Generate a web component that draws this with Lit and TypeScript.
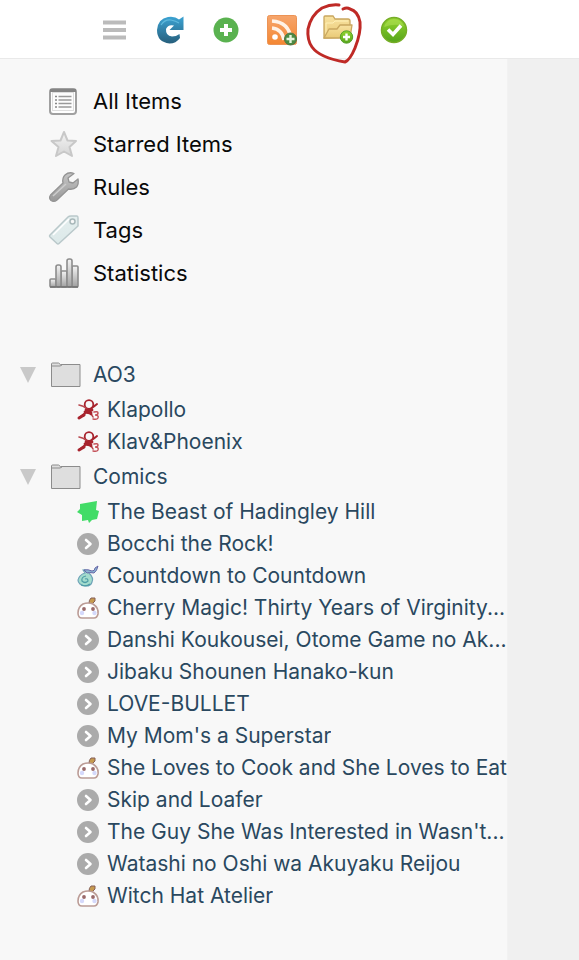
import { LitElement, html, css, svg, nothing } from "lit";
import { customElement, state } from "lit/decorators.js";

type FeedIcon = "ao3" | "tapas" | "arrow" | "wisp" | "mochi";
interface Feed { title: string; icon: FeedIcon; }
interface Folder { name: string; feeds: Feed[]; }

const folders: Folder[] = [
  {
    name: "AO3",
    feeds: [
      { title: "Klapollo", icon: "ao3" },
      { title: "Klav&Phoenix", icon: "ao3" },
    ],
  },
  {
    name: "Comics",
    feeds: [
      { title: "The Beast of Hadingley Hill", icon: "tapas" },
      { title: "Bocchi the Rock!", icon: "arrow" },
      { title: "Countdown to Countdown", icon: "wisp" },
      { title: "Cherry Magic! Thirty Years of Virginity...", icon: "mochi" },
      { title: "Danshi Koukousei, Otome Game no Ak...", icon: "arrow" },
      { title: "Jibaku Shounen Hanako-kun", icon: "arrow" },
      { title: "LOVE-BULLET", icon: "arrow" },
      { title: "My Mom's a Superstar", icon: "arrow" },
      { title: "She Loves to Cook and She Loves to Eat", icon: "mochi" },
      { title: "Skip and Loafer", icon: "arrow" },
      { title: "The Guy She Was Interested in Wasn't...", icon: "arrow" },
      { title: "Watashi no Oshi wa Akuyaku Reijou", icon: "arrow" },
      { title: "Witch Hat Atelier", icon: "mochi" },
    ],
  },
];

const feedIcons: Record<FeedIcon, unknown> = {
  ao3: svg`<g fill="none" stroke="#a8242e" stroke-linecap="round">
      <circle cx="12" cy="5.500" r="4.300" stroke-width="1.800"/>
      <path d="M2 6C8 7 13 12 16 18" stroke-width="1.600" stroke="#b8474e"/>
      <path d="M20 5C15 9 8 14 2 19" stroke-width="2"/>
      <path d="M9 11l6 0M8 13l6 1M10 12l4 3" stroke-width="2.800"/>
      <path d="M2 19l5-3" stroke-width="3"/>
      <path d="M17 13q4-1 4 1q0 2-3 2q4 0 3 3q-1 2-5 1" stroke="#c4525a" stroke-width="1.500"/>
    </g>`,
  tapas: svg`<path d="M3 3l17-3-1 9 3 1-2 8-5 1-3 3-1-3-6 1 0-6-5-3 3-3z" fill="#42dc67"/>`,
  arrow: svg`<circle cx="11" cy="11" r="11" fill="#ababab"/>
    <path d="M9 7l4.500 4-4.500 4" fill="none" stroke="#fff" stroke-width="2.600" stroke-linecap="round" stroke-linejoin="round"/>`,
  wisp: svg`<path d="M6 5q4-1 6 3q5 5 3 9q-1 4-6 4q-8-1-8-6q1-5 7-7z" fill="#a3dccd" stroke="#6fa3b8" stroke-width="1.200"/>
    <path d="M7 5q4-1 8 1q3 0 3-3l3-2q-1 5-4 7q-5-1-7 0z" fill="#8ab5d2" stroke="#6867a8" stroke-width="1"/>
    <path d="M9 11q-5 1-4 5q3 3 6 0q0-3-3-2M4 20q5 2 9-1" fill="none" stroke="#4d9ca6" stroke-width="1.200"/>`,
  mochi: svg`<path d="M12 6q0-3 2-5l4 0 0 3-3 3z" fill="#c69a4e" stroke="#855f57" stroke-width="1"/>
    <path d="M6 7q5-2 10 0q6 4 5 10q-1 4-4 4H5q-4 0-4-5q0-6 5-9z" fill="#fff" stroke="#bb9c96" stroke-width="1.600"/>
    <circle cx="7" cy="12" r="1.900" fill="#9a6a6b"/><circle cx="16" cy="12" r="1.900" fill="#9a6a6b"/>
    <circle cx="5" cy="16" r="2.200" fill="#d5d9fb"/><circle cx="17.500" cy="16" r="2.200" fill="#d5d9fb"/>`,
};

const navItems: { label: string; icon: unknown }[] = [
  {
    label: "All Items",
    icon: svg`<rect x="1" y="3" width="26" height="25" rx="3" fill="#fff" stroke="#a0a0a0" stroke-width="2"/>
      <path d="M1 4.500h26" stroke="#858585" stroke-width="3"/>
      <rect x="3.500" y="6.500" width="21" height="18" fill="#fdfdfd" stroke="#dedede"/>
      <path d="M9.500 10.500h13M9.500 14h13M9.500 17.500h13M9.500 21h13" stroke="#9a9a9a" stroke-width="1.500"/>
      <path d="M6 10.500h2M6 14h2M6 17.500h2M6 21h2" stroke="#888" stroke-width="1.500"/>`,
  },
  {
    label: "Starred Items",
    icon: svg`<path d="M15 3l3.500 8.500 8.500.5-6.500 6 2.500 9-8-4.500-8 4.500 2.500-9-7-6 9-.5z" fill="url(#star)" stroke="#c8c8c8" stroke-width="2" stroke-linejoin="round"/>`,
  },
  {
    label: "Rules",
    icon: svg`<path d="M25 1.500q-5-2-9 1.500-3 3-2 8L1.500 23q-2 3 .5 5.500 3 2 6-.5L19.500 17q5 1 8-2 2.500-3 1.500-8l-5 4-4-1-1-4z" fill="url(#steel)" stroke="#949494" stroke-width="1.300" stroke-linejoin="round"/>
      <path d="M4 24L17 12" stroke="#cdcdcd" stroke-width="1.500"/>`,
  },
  {
    label: "Tags",
    icon: svg`<path d="M19 2q1-1 3-1h6q1 0 1 2v8L10 28.500q-1 1-2 0L1 22q-1-1 0-2z" fill="url(#tag)" stroke="#b9c8ca" stroke-width="1.500" stroke-linejoin="round"/>
      <path d="M20 4L4 20" stroke="#fff" stroke-width="1.500"/>
      <circle cx="23.500" cy="6.500" r="2.500" fill="#f8f8f8" stroke="#a9b8ba" stroke-width="1.500"/>`,
  },
  {
    label: "Statistics",
    icon: svg`<g fill="url(#bars)" stroke="#8d8d8d" stroke-width="1.600">
      <rect x="1" y="21" width="6" height="8" rx="1"/><rect x="12" y="13" width="6" height="16" rx="1"/>
      <rect x="23" y="8" width="6" height="21" rx="1"/><rect x="7" y="7" width="5" height="22" rx="2"/>
      <rect x="18" y="1" width="5" height="28" rx="2"/></g>
      <path d="M1 29h28" stroke="#707070" stroke-width="1.500"/>`,
  },
];

const badge = svg`<circle cx="23.500" cy="22" r="6.200" fill="url(#green)" stroke="#57a12d"/>
  <path d="M23.500 18.500v7M20 22h7" stroke="#fff" stroke-width="2.400"/>`;

const tools: { label: string; icon: unknown; ringed?: boolean }[] = [
  { label: "Menu", icon: svg`<path d="M4 7.500h23M4 15h23M4 22.500h23" stroke="#bbb" stroke-width="4"/>` },
  {
    label: "Refresh",
    icon: svg`<path d="M28.500 1.500v13.500H14.500l4.500-4.500q-6-1.500-8 3.500-.5 7 6 7.500 4 0 7.500-2.500l.5 4q-4 5.500-10.500 5.500Q2 27 2 15 3 3.500 13 2q7-1 11 2.500z" fill="url(#blue)"/>
      <path d="M6 10q4-6 10-5 5 1 8 3" fill="none" stroke="#5fb9dc" stroke-width="1.200"/>`,
  },
  {
    label: "Add subscription",
    icon: svg`<circle cx="15" cy="15" r="12.500" fill="#5ab250"/><path d="M15 9v12M9 15h12" stroke="#fff" stroke-width="4"/>`,
  },
  {
    label: "Add feed",
    icon: svg`<rect x=".5" y=".5" width="29" height="29" rx="2" fill="url(#orange)" stroke="#ec9355"/>
      <circle cx="8" cy="22" r="2.800" fill="#fff"/><path d="M5 13q10 1 12 12M5 6q17 1 19 18" fill="none" stroke="#fff2e6" stroke-width="3.600"/>
      <circle cx="23.500" cy="24" r="6" fill="#4c8b43" stroke="#4a7444"/><path d="M23.500 20v8M19.500 24h8" stroke="#e6f4dd" stroke-width="2.400"/>`,
  },
  {
    label: "Add folder",
    ringed: true,
    icon: svg`<path d="M1 23V2q0-1 1-1h8l2 3h13q2 0 2 2v16z" fill="url(#sand)" stroke="#c9a75f" stroke-width="1.300"/>
      <path d="M3 21V8h7l2-2h13" fill="none" stroke="#fff0b7"/>
      <path d="M1 23l5-9h8l3-4h12l-2 13z" fill="url(#sand)" stroke="#c9a75f" stroke-width="1.300" stroke-linejoin="round"/>${badge}`,
  },
  {
    label: "Mark all as read",
    icon: svg`<circle cx="15" cy="15" r="12.500" fill="url(#green)" stroke="#76ad27" stroke-width="1.500"/>
      <path d="M5 12q3-8 10-8t10 7q-9-3-20 1z" fill="#b6e45c" opacity=".5"/>
      <path d="M9 14.500l5 5 8-9" fill="none" stroke="#fff" stroke-width="3.600"/>`,
  },
];

const gradient = (id: string, from: string, to: string) => svg`
  <linearGradient id=${id} x1="0" y1="0" x2="0" y2="1">
    <stop offset="0" stop-color=${from}/><stop offset="1" stop-color=${to}/>
  </linearGradient>`;

@customElement("app-root")
export class AppRoot extends LitElement {
  @state() private closed: string[] = [];

  static styles = css`
    :host {
      display: flex;
      flex-direction: column;
      min-height: 100vh;
      background: #f0f0f0;
      color: #090909;
      font: 21px/32px Inter, "Liberation Sans", sans-serif;
    }
    * { box-sizing: border-box; }
    svg { display: block; flex: none; overflow: visible; }
    button { border: 0; padding: 0; background: none; font: inherit; color: inherit; cursor: pointer; }
    a { color: inherit; text-decoration: none; }
    ul { list-style: none; margin: 0; padding: 0; }
    .defs { position: absolute; width: 0; height: 0; }
    .toolbar {
      display: flex;
      align-items: center;
      gap: 26px;
      height: 59px;
      padding: 2px 0 0 99px;
      background: #fff;
      border-bottom: 1px solid #e9e9e9;
    }
    .tool { position: relative; width: 30px; height: 30px; }
    .ring { position: absolute; left: -19px; top: -13px; pointer-events: none; }
    .body { flex: 1; display: grid; grid-template-columns: minmax(0, 1fr) 71px; }
    .sidebar { background: #f8f8f8; border-right: 1px solid #f2f2f2; padding: 20px 0; }
    .nav { padding: 0 0 62px 49px; font-size: 22px; }
    .nav a { display: flex; align-items: center; gap: 14px; height: 43px; }
    .folder { display: flex; align-items: center; height: 38px; padding-left: 20px; color: #2a485f; }
    .twisty { width: 16px; height: 16px; margin-right: 15px; }
    .closed { transform: rotate(-90deg); }
    .folder a { display: flex; align-items: center; gap: 12px; }
    .feed { display: flex; align-items: center; gap: 8px; height: 32px; padding-left: 77px; color: #2a485f; }
    .title { overflow: hidden; white-space: nowrap; text-overflow: ellipsis; }
  `;

  private toggle(name: string) {
    this.closed = this.closed.includes(name)
      ? this.closed.filter((n) => n !== name)
      : [...this.closed, name];
  }

  private renderFolder(folder: Folder) {
    const shut = this.closed.includes(folder.name);
    return html`<li>
      <div class="folder">
        <button class="twisty ${shut ? "closed" : ""}" aria-label="Toggle ${folder.name}" aria-expanded=${shut ? "false" : "true"}
          @click=${() => this.toggle(folder.name)}>
          <svg width="16" height="16"><path d="M0 0h16L8 16z" fill="#c9c9c9"/></svg>
        </button>
        <a href="#">
          <svg width="30" height="26" viewBox="0 0 30 26">
            <path d="M.5 24.500V2q0-1 1-1h6l2 1.500h19.500v22z" fill="#dedede" stroke="#8c8c8c"/>
            <path d="M1 4h8l2-1" fill="none" stroke="#8c8c8c"/>
          </svg>
          <span>${folder.name}</span>
        </a>
      </div>
      ${shut ? nothing : html`<ul>${folder.feeds.map((f) => html`<li>
        <a class="feed" href="#">
          <svg width="22" height="22" viewBox="0 0 22 22">${feedIcons[f.icon]}</svg>
          <span class="title">${f.title}</span>
        </a></li>`)}</ul>`}
    </li>`;
  }

  render() {
    return html`
      <svg class="defs" aria-hidden="true"><defs>
        ${gradient("blue", "#3ba3d3", "#275f7c")}
        ${gradient("green", "#94d42f", "#55a51b")}
        ${gradient("orange", "#f6a56c", "#f48732")}
        ${gradient("sand", "#f8e2a0", "#e9c976")}
        ${gradient("star", "#f4f4f4", "#d5d5d5")}
        ${gradient("steel", "#c5c5c5", "#999")}
        ${gradient("tag", "#e4eeee", "#dce9e9")}
        ${gradient("bars", "#f4f4f4", "#a0a0a0")}
      </defs></svg>
      <header class="toolbar">
        ${tools.map((t) => html`<button class="tool" aria-label=${t.label}>
          <svg width="30" height="30" viewBox="0 0 30 30">${t.icon}</svg>
          ${t.ringed ? html`<svg class="ring" width="60" height="62" viewBox="0 0 60 62">
            <path d="M35 3Q27 2 18 6Q7 13 4 27Q3 38 8 45Q16 56 41 60Q46 58 51 46Q57 31 56 20Q54 9 46 7Q43 5 39 7"
              fill="none" stroke="#bf2a26" stroke-width="3" stroke-linecap="round" stroke-linejoin="round"/></svg>` : nothing}
        </button>`)}
      </header>
      <div class="body">
        <aside class="sidebar">
          <nav class="nav">
            ${navItems.map((n) => html`<a href="#">
              <svg width="30" height="30" viewBox="0 0 30 30">${n.icon}</svg><span>${n.label}</span></a>`)}
          </nav>
          <ul>${folders.map((f) => this.renderFolder(f))}</ul>
        </aside>
        <main></main>
      </div>`;
  }
}
